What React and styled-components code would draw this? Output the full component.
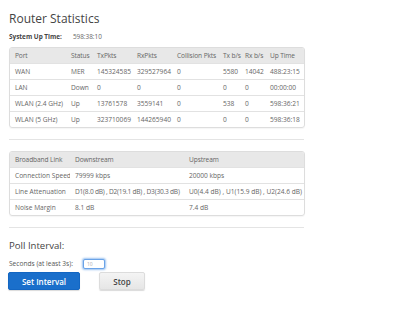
import React from "react";
import styled, { createGlobalStyle } from "styled-components";

const GlobalStyle = createGlobalStyle`
  body {
    margin: 0;
    background: #ffffff;
    font-family: "Open Sans", "Liberation Sans", sans-serif;
    color: #555555;
  }
`;

const portRows = [
  ["WAN", "MER", "145324585", "329527964", "0", "5580", "14042", "488:23:15"],
  ["LAN", "Down", "0", "0", "0", "0", "0", "00:00:00"],
  ["WLAN (2.4 GHz)", "Up", "13761578", "3559141", "0", "538", "0", "598:36:21"],
  ["WLAN (5 GHz)", "Up", "323710069", "144265940", "0", "0", "0", "598:36:18"],
];

const portCols = [56, 26, 40, 40, 46, 22, 25, 39];

const linkRows = [
  ["Connection Speed", "79999 kbps", "20000 kbps"],
  ["Line Attenuation", "D1(8.0 dB) , D2(19.1 dB) , D3(30.3 dB)", "U0(4.4 dB) , U1(15.9 dB) , U2(24.6 dB)"],
  ["Noise Margin", "8.1 dB", "7.4 dB"],
];

const linkCols = [60, 114, 120];

export default function App() {
  return (
    <Page>
      <GlobalStyle />
      <Title>Router Statistics</Title>
      <UpTime>
        <UpLabel>System Up Time:</UpLabel>
        <span>598:38:10</span>
      </UpTime>

      <StatsTable>
        <colgroup>
          {portCols.map((w, i) => (
            <col key={i} style={{ width: w }} />
          ))}
        </colgroup>
        <thead>
          <tr>
            {["Port", "Status", "TxPkts", "RxPkts", "Collision Pkts", "Tx b/s", "Rx b/s", "Up Time"].map((h) => (
              <Th key={h}>{h}</Th>
            ))}
          </tr>
        </thead>
        <tbody>
          {portRows.map((r) => (
            <tr key={r[0]}>
              {r.map((c, i) => (
                <Td key={i}>{c}</Td>
              ))}
            </tr>
          ))}
        </tbody>
      </StatsTable>

      <Rule />

      <StatsTable>
        <colgroup>
          {linkCols.map((w, i) => (
            <col key={i} style={{ width: w }} />
          ))}
        </colgroup>
        <thead>
          <tr>
            <Th>Broadband Link</Th>
            <Th>Downstream</Th>
            <Th>Upstream</Th>
          </tr>
        </thead>
        <tbody>
          {linkRows.map((r) => (
            <tr key={r[0]}>
              {r.map((c, i) => (
                <Td key={i} $tight={i === 1 && c.length > 30}>
                  {c}
                </Td>
              ))}
            </tr>
          ))}
        </tbody>
      </StatsTable>

      <Rule />

      <SubTitle>Poll Interval:</SubTitle>
      <IntervalRow>
        <span>Seconds (at least 3s):</span>
        <IntervalInput defaultValue="10" />
      </IntervalRow>
      <Buttons>
        <Button $primary>Set Interval</Button>
        <Button>Stop</Button>
      </Buttons>
    </Page>
  );
}

const Page = styled.div`
  padding: 10px 9px 20px;
  width: 295px;
`;

const Title = styled.h1`
  margin: 0 0 5px;
  font-size: 12px;
  font-weight: 400;
  color: #444;
  line-height: 17px;
`;

const UpTime = styled.div`
  display: flex;
  gap: 11px;
  font-size: 6.4px;
  line-height: 10px;
  color: #666;
  margin-bottom: 5px;
`;

const UpLabel = styled.span`
  font-weight: 700;
  color: #444;
`;

const StatsTable = styled.table`
  width: 295px;
  border-collapse: separate;
  border-spacing: 0;
  table-layout: fixed;
  border: 1px solid #dddddd;
  border-radius: 3px;
  overflow: hidden;
  font-size: 6.6px;
  color: #666;
  box-shadow: 0 1px 1px rgba(0, 0, 0, 0.04);
`;

const Th = styled.th`
  background: #e8e8e8;
  font-weight: 400;
  text-align: left;
  height: 15px;
  padding: 0 0 0 5px;
  white-space: nowrap;
  overflow: visible;
  letter-spacing: -0.1px;
  color: #666;
`;

const Td = styled.td`
  height: 15px;
  padding: 0 0 0 5px;
  border-top: 1px solid #e2e2e2;
  white-space: nowrap;
  overflow: hidden;
  letter-spacing: ${(p) => (p.$tight ? "-0.22px" : "normal")};
`;

const Rule = styled.hr`
  border: 0;
  border-top: 1px solid #e4e4e4;
  margin: 11px 0 11px;
  width: 295px;
`;

const SubTitle = styled.h2`
  margin: 1px 0 5px;
  font-size: 9.6px;
  font-weight: 400;
  color: #444;
  line-height: 14px;
`;

const IntervalRow = styled.div`
  display: flex;
  align-items: center;
  gap: 10px;
  height: 11px;
  font-size: 6.6px;
  color: #555;
  margin-bottom: 3px;
`;

const IntervalInput = styled.input`
  box-sizing: border-box;
  width: 22px;
  height: 10px;
  padding: 0 3px;
  font-size: 5px;
  color: #aaa;
  border: 1px solid #6aa3e8;
  border-radius: 2px;
  box-shadow: 0 0 2px 1px #9cc3f0;
  font-family: inherit;
  outline: none;
`;

const Buttons = styled.div`
  display: flex;
  gap: 19px;
  margin-left: -1px;
`;

const Button = styled.button`
  width: ${(p) => (p.$primary ? "72px" : "46px")};
  height: 18px;
  border-radius: 2px;
  border: 1px solid ${(p) => (p.$primary ? "#1366c2" : "#dcdcdc")};
  background: ${(p) => (p.$primary ? "#1a6fcb" : "linear-gradient(#f4f4f4, #e6e6e6)")};
  color: ${(p) => (p.$primary ? "#ffffff" : "#444")};
  font-family: inherit;
  font-size: 8px;
  font-weight: 600;
  padding: 0;
  box-shadow: 0 1px 1px rgba(0, 0, 0, 0.15);
`;
